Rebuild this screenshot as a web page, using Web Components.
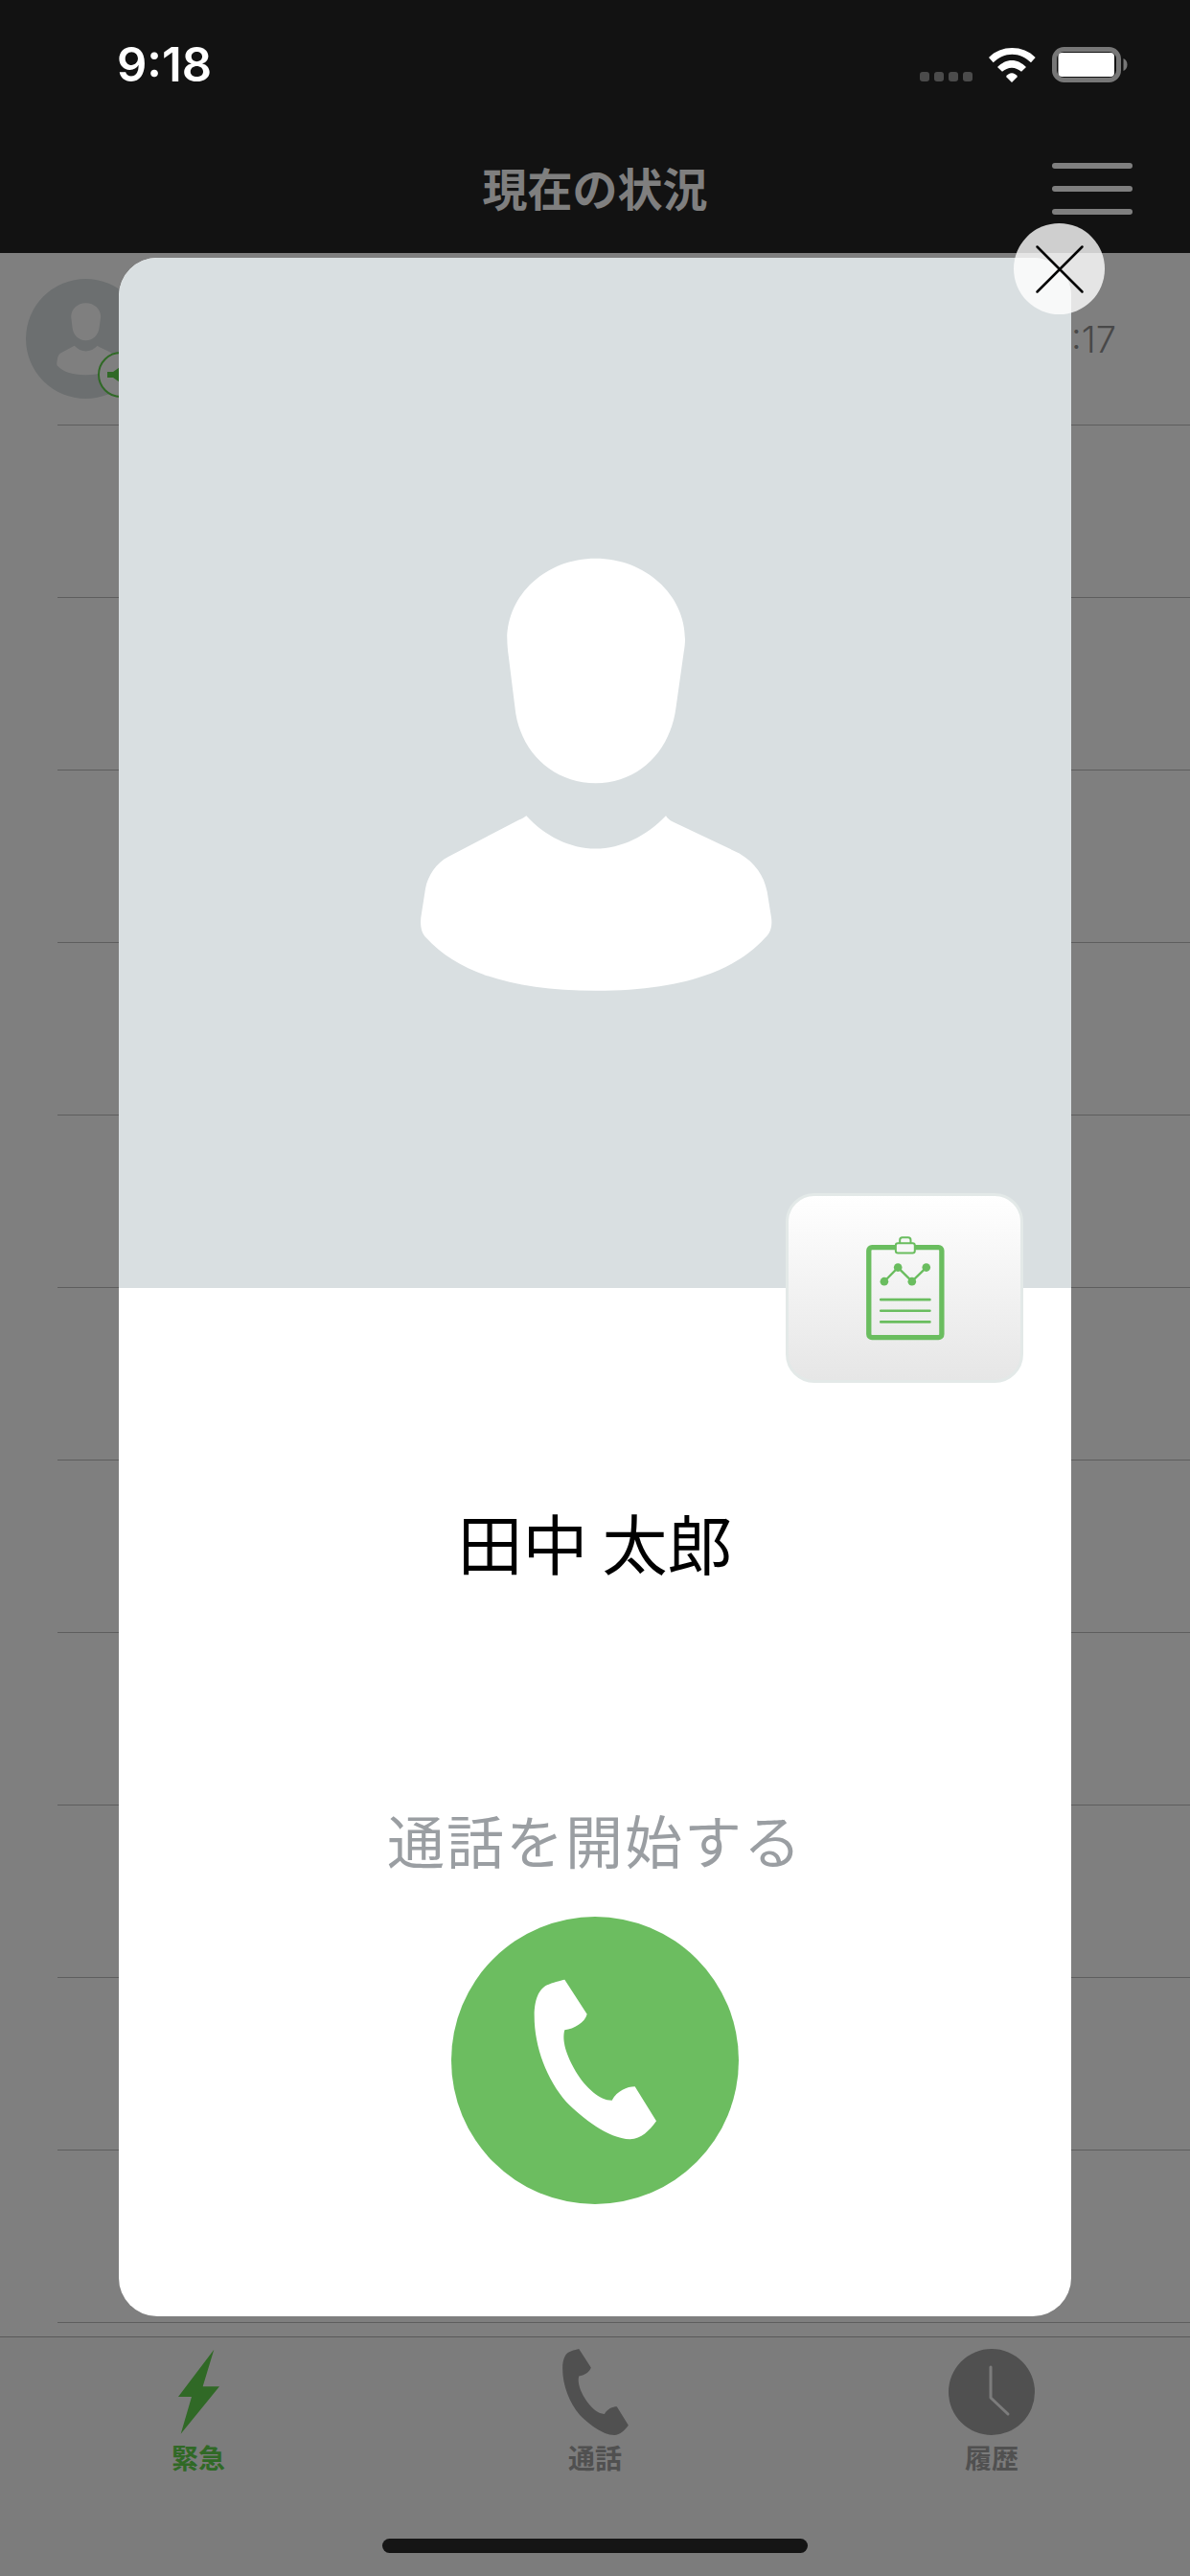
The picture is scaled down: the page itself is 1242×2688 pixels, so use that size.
<!DOCTYPE html>
<html lang="ja">
<head>
<meta charset="utf-8">
<title>現在の状況</title>
<style>
  html, body { margin: 0; padding: 0; background: #fff; }
</style>
</head>
<body>
<app-shell>
  <status-bar time="9:18"></status-bar>
  <nav-bar heading="現在の状況"></nav-bar>
  <call-list></call-list>
  <tab-bar></tab-bar>
  <contact-modal name="田中 太郎" action="通話を開始する"></contact-modal>
</app-shell>

<script>
const JP = `"Noto Sans CJK JP", "Noto Sans", sans-serif`

const PHONE_PATH = `M625 677 L695 785 C688 812 655 830 625 835 C618 860 622 900 660 965 C690 1015 735 1055 773 1055
  C790 1025 820 1012 845 1012 L912 1120 C890 1150 865 1176 830 1177 C760 1175 680 1110 630 1060
  C570 990 530 890 530 790 C530 730 550 700 575 692 C600 682 612 680 625 677 Z`

const PERSON_PATH = `M665 97 C510 97 388 210 388 350 C388 365 390 385 392 400 L412 560 C425 700 530 800 665 800
  C800 800 900 700 917 560 L941 390 C944 375 945 360 945 350 C945 210 820 97 665 97 Z
  M448 902 C505 965 585 1005 665 1005 C745 1005 825 965 885 902 C890 910 898 916 905 920 L1115 1020
  C1165 1050 1192 1090 1202 1140 L1215 1220 C1219 1250 1212 1270 1195 1285 C1100 1390 930 1450 665 1450
  C400 1450 230 1390 135 1285 C120 1270 115 1250 118 1220 L132 1130 C140 1090 165 1050 205 1030 L425 915
  C433 911 441 908 448 902 Z`

const personSvg = (width, height) => `
  <svg width="${width}" height="${height}" viewBox="3 19.5 1320 1500" aria-hidden="true">
    <path fill="#fff" d="${PERSON_PATH}"/>
  </svg>`

class AppShell extends HTMLElement {
  constructor() {
    super()
    this.attachShadow({ mode: 'open' })
    this.shadowRoot.innerHTML = `
      <style>
        :host {
          display: flex;
          flex-direction: column;
          position: relative;
          width: 1242px;
          height: 2688px;
          overflow: hidden;
          font-family: ${JP};
        }
      </style>
      <slot></slot>
    `
  }
}

class StatusBar extends HTMLElement {
  constructor() {
    super()
    this.attachShadow({ mode: 'open' })
    this.shadowRoot.innerHTML = `
      <style>
        :host {
          display: flex;
          position: relative;
          z-index: 2;
          box-sizing: border-box;
          height: 132px;
          padding: 40px 65px 0 122px;
          background: #121212;
          justify-content: space-between;
          align-items: flex-start;
        }
        .time {
          font: 600 49px/56px Inter, "Liberation Sans", sans-serif;
          color: #fff;
        }
        .icons {
          display: flex;
          align-items: flex-end;
          gap: 17px;
          margin-top: 9px;
        }
        .dots {
          display: flex;
          gap: 5px;
          margin-bottom: 1px;
        }
        .dots i {
          width: 10px;
          height: 10px;
          border-radius: 3px;
          background: #4b4b4b;
        }
        svg { display: block; }
      </style>
      <span class="time">${this.getAttribute('time')}</span>
      <div class="icons">
        <div class="dots"><i></i><i></i><i></i><i></i></div>
        <svg width="49" height="36" viewBox="276 58 147 108" fill="#fff" aria-hidden="true">
          <path d="M276 88 C295 68 322 58 349 58 C376 58 403 68 422 88 L408 104 C392 88 371 78 349 78 C327 78 306 88 290 104 Z"/>
          <path d="M303 118 C316 105 332 97 348 97 C364 97 380 105 393 118 L378 132 C370 125 359 120 348 120 C337 120 326 125 318 132 Z"/>
          <path d="M330 148 C335 141 341 137 348 137 C355 137 361 141 366 148 L348 166 Z"/>
        </svg>
        <svg width="79" height="37" viewBox="0 0 79 37" aria-hidden="true">
          <rect x="2.5" y="2.5" width="67" height="32" rx="10" fill="none" stroke="#777" stroke-width="5"/>
          <rect x="6.5" y="6" width="58.5" height="25" rx="4" fill="#fff"/>
          <path d="M74.5 12 C77 13 78.5 15.5 78.5 18.5 C78.5 21.5 77 24 74.5 25 Z" fill="#777"/>
        </svg>
      </div>
    `
  }
}

class NavBar extends HTMLElement {
  constructor() {
    super()
    this.attachShadow({ mode: 'open' })
    this.shadowRoot.innerHTML = `
      <style>
        :host {
          display: grid;
          grid-template-columns: 1fr auto 1fr;
          align-items: center;
          box-sizing: border-box;
          height: 132px;
          padding: 0 60px;
          background: #242424;
        }
        h1 {
          grid-column: 2;
          margin: -6px 0 0;
          font: 700 47px/60px ${JP};
          color: #fff;
        }
        .menu {
          justify-self: end;
          display: flex;
          flex-direction: column;
          gap: 18px;
          width: 84px;
          margin-top: -2px;
        }
        .menu i {
          height: 6px;
          border-radius: 3px;
          background: #fff;
        }
      </style>
      <h1>${this.getAttribute('heading')}</h1>
      <div class="menu"><i></i><i></i><i></i></div>
    `
  }
}

class CallRow extends HTMLElement {
  constructor() {
    super()
    this.attachShadow({ mode: 'open' })
    const time = this.getAttribute('time')
    this.shadowRoot.innerHTML = `
      <style>
        :host {
          display: flex;
          align-items: center;
          justify-content: space-between;
          position: relative;
          box-sizing: border-box;
          height: 180px;
          padding: 0 77px 1px 27px;
        }
        :host::after {
          content: "";
          position: absolute;
          left: 60px;
          right: 0;
          bottom: 0;
          height: 1px;
          background: #bcbcbc;
        }
        .avatar {
          display: flex;
          align-items: center;
          justify-content: center;
          position: relative;
          width: 125px;
          height: 125px;
          border-radius: 50%;
          background: #d9dfe1;
        }
        .badge {
          position: absolute;
          left: 75px;
          top: 76px;
          box-sizing: border-box;
          width: 48px;
          height: 48px;
          border-radius: 50%;
          border: 2px solid #60d24c;
          background: #fff;
          display: flex;
          align-items: center;
          justify-content: center;
        }
        .time {
          font: 300 38px/46px Inter, "Liberation Sans", sans-serif;
          color: #909090;
        }
      </style>
      ${time ? `
        <div class="avatar">
          ${personSvg(73, 83)}
          <div class="badge">
            <svg width="28" height="24" viewBox="0 0 28 24" aria-hidden="true">
              <path fill="#60d24c" d="M0 9 H6 L16 2 V22 L6 15 H0 Z"/>
            </svg>
          </div>
        </div>
        <span class="time">${time}</span>
      ` : ''}
    `
  }
}

class CallList extends HTMLElement {
  constructor() {
    super()
    this.attachShadow({ mode: 'open' })
    const rows = ['<call-row time="9:17"></call-row>']
    for (let i = 0; i < 11; i++) rows.push('<call-row></call-row>')
    this.shadowRoot.innerHTML = `
      <style>
        :host {
          display: block;
          flex: 1;
          min-height: 0;
          overflow: hidden;
          background: #fff;
        }
      </style>
      ${rows.join('')}
    `
  }
}

class TabItem extends HTMLElement {
  constructor() {
    super()
    this.attachShadow({ mode: 'open' })
    this.shadowRoot.innerHTML = `
      <style>
        :host {
          display: flex;
          flex-direction: column;
          align-items: center;
          gap: 6px;
          color: #a0a0a0;
        }
        :host([active]) { color: #60d24c; }
        .icon {
          display: flex;
          justify-content: center;
          height: 90px;
        }
        .label {
          font: 700 28px/34px ${JP};
        }
      </style>
      <div class="icon"><slot></slot></div>
      <span class="label">${this.getAttribute('label')}</span>
    `
  }
}

class TabBar extends HTMLElement {
  constructor() {
    super()
    this.attachShadow({ mode: 'open' })
    this.shadowRoot.innerHTML = `
      <style>
        :host {
          display: flex;
          flex-direction: column;
          box-sizing: border-box;
          height: 250px;
          padding-top: 12px;
          background: #f9f9f9;
          border-top: 1px solid #b2b2b2;
        }
        .tabs {
          display: grid;
          grid-template-columns: repeat(3, 1fr);
        }
        .home {
          width: 444px;
          height: 15px;
          margin: auto auto 24px;
          border-radius: 8px;
          background: #2a2a2a;
        }
      </style>
      <div class="tabs">
        <tab-item label="緊急" active>
          <svg width="43" height="90" viewBox="136 64 129 270" aria-hidden="true">
            <path fill="currentColor" d="M248 66 L213 182 H265 L144 330 L178 214 H136 Z"/>
          </svg>
        </tab-item>
        <tab-item label="通話">
          <svg width="69" height="90" viewBox="530 677 382 500" aria-hidden="true">
            <path fill="currentColor" d="${PHONE_PATH}"/>
          </svg>
        </tab-item>
        <tab-item label="履歴">
          <svg width="90" height="90" viewBox="0 0 90 90" aria-hidden="true">
            <circle cx="45" cy="45" r="45" fill="currentColor"/>
            <path d="M44 19 V51 L62 68" fill="none" stroke="#f9f9f9" stroke-width="3" stroke-linecap="round" stroke-linejoin="round"/>
          </svg>
        </tab-item>
      </div>
      <div class="home"></div>
    `
  }
}

class ContactModal extends HTMLElement {
  constructor() {
    super()
    this.attachShadow({ mode: 'open' })
    this.shadowRoot.innerHTML = `
      <style>
        :host {
          display: block;
          position: absolute;
          inset: 0;
          z-index: 1;
          box-sizing: border-box;
          padding: 269px 124px 271px;
          background: rgba(0, 0, 0, 0.5);
        }
        .card {
          display: flex;
          flex-direction: column;
          position: relative;
          height: 100%;
          border-radius: 40px;
          background: #fff;
        }
        .photo {
          display: flex;
          align-items: center;
          justify-content: center;
          position: relative;
          height: 1075px;
          border-radius: 40px 40px 0 0;
          background: #d9dfe1;
        }
        .report {
          position: absolute;
          right: 50px;
          bottom: -99px;
          display: flex;
          align-items: center;
          justify-content: center;
          box-sizing: border-box;
          width: 248px;
          height: 198px;
          border: 3px solid #e3e9e8;
          border-radius: 30px;
          background: linear-gradient(#fff, #e6e6e6);
        }
        .body {
          display: flex;
          flex-direction: column;
          align-items: center;
          padding-top: 225px;
        }
        .name {
          font: 400 68px/80px ${JP};
          color: #000;
        }
        .action {
          margin-top: 240px;
          font: 400 60px/60px ${JP};
          letter-spacing: 2px;
          color: #9a9ea2;
        }
        .call {
          margin-top: 51px;
          width: 300px;
          height: 300px;
          border-radius: 50%;
          background: #6cbd60;
        }
        .call svg, .report svg { display: block; }
        .close {
          position: absolute;
          left: 1058px;
          top: 233px;
          width: 95px;
          height: 95px;
          border-radius: 50%;
          background: rgba(255, 255, 255, 0.8);
        }
      </style>
      <div class="card">
        <div class="photo">
          ${personSvg(440, 500)}
          <div class="report">
            <svg width="87" height="113" viewBox="360 262 260 340" aria-hidden="true">
              <rect x="376.5" y="303" width="229" height="283" rx="10" fill="none" stroke="#6abd5f" stroke-width="16"/>
              <rect x="474" y="272" width="34" height="26" rx="8" fill="#f7f7f7" stroke="#6abd5f" stroke-width="6"/>
              <rect x="461" y="290" width="60" height="31" rx="7" fill="#f7f7f7" stroke="#6abd5f" stroke-width="6"/>
              <path d="M425 410 L468 366 L512 410 L557 366" fill="none" stroke="#6abd5f" stroke-width="7"/>
              <circle cx="425" cy="410" r="13" fill="#6abd5f"/>
              <circle cx="468" cy="366" r="13" fill="#6abd5f"/>
              <circle cx="512" cy="410" r="13" fill="#6abd5f"/>
              <circle cx="557" cy="366" r="13" fill="#6abd5f"/>
              <path d="M414 467 H568 M414 502 H568 M414 537 H568" stroke="#6abd5f" stroke-width="8" stroke-linecap="round"/>
            </svg>
          </div>
        </div>
        <div class="body">
          <div class="name">${this.getAttribute('name')}</div>
          <div class="action">${this.getAttribute('action')}</div>
          <div class="call">
            <svg width="300" height="300" viewBox="270 480 900 900" aria-hidden="true">
              <path fill="#fff" d="${PHONE_PATH}"/>
            </svg>
          </div>
        </div>
      </div>
      <div class="close">
        <svg width="95" height="95" viewBox="0 0 95 95" aria-hidden="true">
          <path d="M24.5 24.5 L71.5 71.5 M71.5 24.5 L24.5 71.5" stroke="#000" stroke-width="2.5" stroke-linecap="round"/>
        </svg>
      </div>
    `
  }
}

customElements.define('app-shell', AppShell)
customElements.define('status-bar', StatusBar)
customElements.define('nav-bar', NavBar)
customElements.define('call-row', CallRow)
customElements.define('call-list', CallList)
customElements.define('tab-item', TabItem)
customElements.define('tab-bar', TabBar)
customElements.define('contact-modal', ContactModal)
</script>
</body>
</html>
